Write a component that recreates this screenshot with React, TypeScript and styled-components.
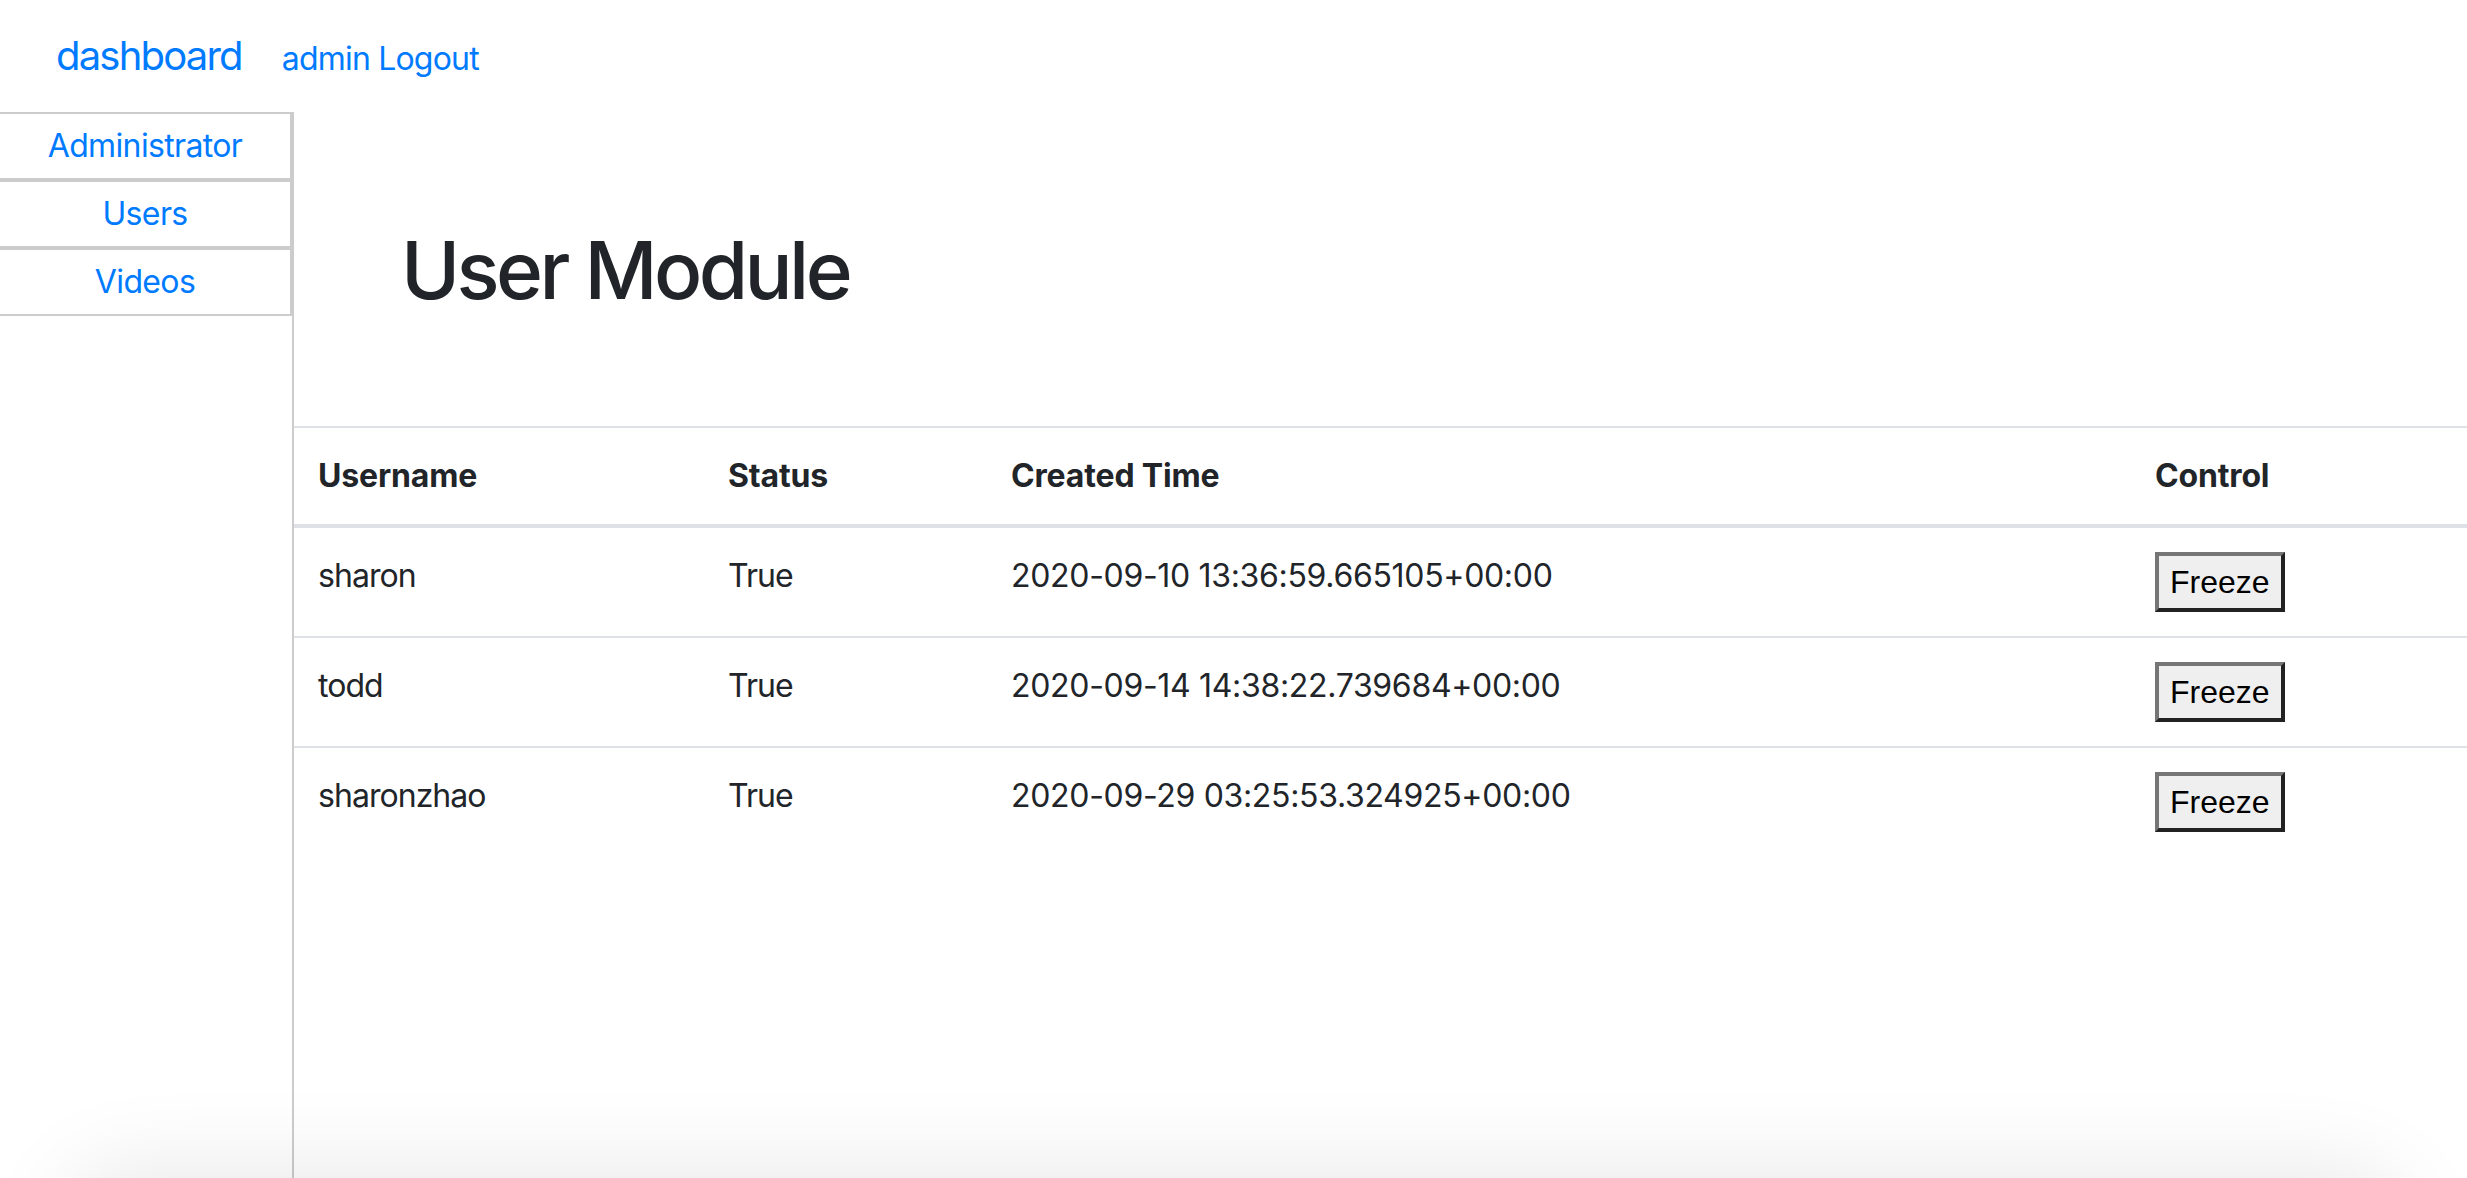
import React from "react";
import styled, { createGlobalStyle } from "styled-components";

const GlobalStyle = createGlobalStyle`
  html, body { margin: 0; padding: 0; background: #ffffff; }
  body {
    font-family: Inter, "Noto Sans", Roboto, sans-serif;
    color: #212529;
    font-size: 32px;
    line-height: 48px;
    overflow: hidden;
  }
  * { box-sizing: border-box; }
`;

const Page = styled.div`
  display: flex;
  flex-direction: column;
  min-height: 100vh;
  position: relative;
`;

const Navbar = styled.nav`
  display: flex;
  align-items: baseline;
  padding: 16px 0 16px 56px;
  height: 112px;
`;

const Brand = styled.a`
  font-size: 40px;
  line-height: 60px;
  padding: 10px 0;
  margin-right: 40px;
  color: #007bff;
  text-decoration: none;
  letter-spacing: -0.045em;
`;

const NavText = styled.a`
  font-size: 32px;
  line-height: 48px;
  color: #007bff;
  text-decoration: none;
  letter-spacing: -0.025em;
`;

const Body = styled.div`
  flex: 1;
  display: flex;
`;

const Sidebar = styled.aside`
  width: 294px;
  flex: none;
  border-right: 2px solid #cccccc;
  display: flex;
  flex-direction: column;
`;

const SideItem = styled.a`
  display: block;
  text-align: center;
  border: 2px solid #cccccc;
  border-left: none;
  padding: 8px 0;
  font-size: 32px;
  line-height: 48px;
  color: #007bff;
  text-decoration: none;
  letter-spacing: -0.02em;
`;

const Main = styled.main`
  flex: 1;
  display: flex;
  flex-direction: column;
`;

const HeadingBlock = styled.div`
  padding: 110px 0 108px 107px;
`;

const Title = styled.h1`
  margin: 0;
  font-size: 80px;
  line-height: 96px;
  font-weight: 500;
  letter-spacing: -0.045em;
  color: #212529;
`;

const Table = styled.table`
  width: 100%;
  border-collapse: collapse;
  table-layout: fixed;
`;

const Col = styled.col<{ $w?: number }>`
  width: ${(p) => (p.$w ? `${p.$w}px` : "auto")};
`;

const Th = styled.th`
  text-align: left;
  vertical-align: bottom;
  padding: 24px;
  font-size: 32px;
  line-height: 48px;
  font-weight: 700;
  letter-spacing: -0.005em;
  border-top: 2px solid #dee2e6;
  border-bottom: 4px solid #dee2e6;
`;

const Td = styled.td<{ $tracking?: number }>`
  text-align: left;
  vertical-align: top;
  padding: 24px;
  font-size: 32px;
  line-height: 48px;
  letter-spacing: ${(p) => (p.$tracking ?? -0.03)}em;
  border-top: 2px solid #dee2e6;
`;

const FreezeButton = styled.button`
  display: inline-block;
  vertical-align: top;
  height: 60px;
  padding: 0 11px;
  font-family: "Liberation Sans", Arial, sans-serif;
  font-size: 32px;
  line-height: 52px;
  color: #000000;
  background: #efefef;
  border-style: solid;
  border-width: 4px;
  border-color: #767676 #222222 #222222 #767676;
  border-radius: 0;
  cursor: pointer;
`;

const BottomShade = styled.div`
  position: fixed;
  left: 70px;
  right: 70px;
  bottom: -120px;
  height: 120px;
  border-radius: 60px;
  box-shadow: 0 0 90px 10px rgba(0, 0, 0, 0.09);
  pointer-events: none;
`;

type User = { name: string; status: string; created: string };

const users: User[] = [
  { name: "sharon", status: "True", created: "2020-09-10 13:36:59.665105+00:00" },
  { name: "todd", status: "True", created: "2020-09-14 14:38:22.739684+00:00" },
  { name: "sharonzhao", status: "True", created: "2020-09-29 03:25:53.324925+00:00" },
];

export default function App() {
  return (
    <Page>
      <GlobalStyle />
      <Navbar>
        <Brand href="#">dashboard</Brand>
        <NavText href="#">admin Logout</NavText>
      </Navbar>
      <Body>
        <Sidebar>
          <SideItem href="#">Administrator</SideItem>
          <SideItem href="#">Users</SideItem>
          <SideItem href="#">Videos</SideItem>
        </Sidebar>
        <Main>
          <HeadingBlock>
            <Title>User Module</Title>
          </HeadingBlock>
          <Table>
            <colgroup>
              <Col $w={410} />
              <Col $w={283} />
              <Col $w={1144} />
              <Col />
            </colgroup>
            <thead>
              <tr>
                <Th>Username</Th>
                <Th>Status</Th>
                <Th>Created Time</Th>
                <Th>Control</Th>
              </tr>
            </thead>
            <tbody>
              {users.map((u) => (
                <tr key={u.name}>
                  <Td>{u.name}</Td>
                  <Td>{u.status}</Td>
                  <Td $tracking={-0.01}>{u.created}</Td>
                  <Td>
                    <FreezeButton>Freeze</FreezeButton>
                  </Td>
                </tr>
              ))}
            </tbody>
          </Table>
        </Main>
      </Body>
      <BottomShade />
    </Page>
  );
}
